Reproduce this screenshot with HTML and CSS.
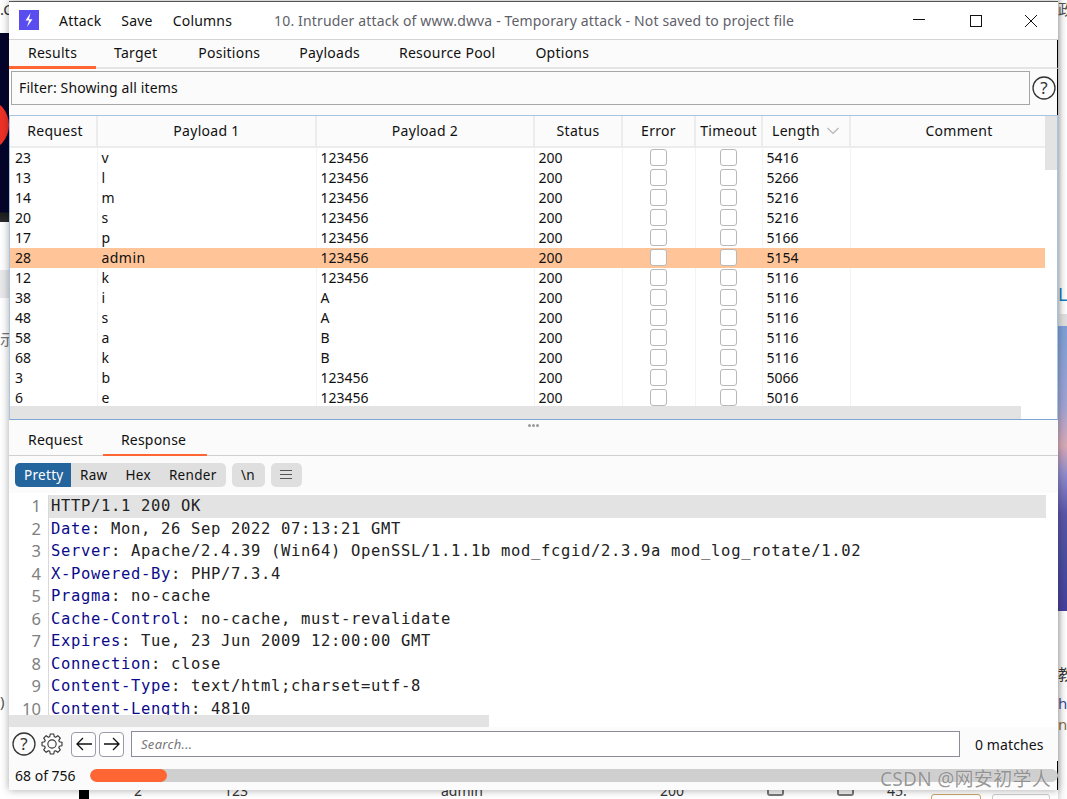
FILE: index.html
```html
<!DOCTYPE html>
<html lang="en">
<head>
<meta charset="utf-8">
<title>Intruder attack</title>
<link rel="stylesheet" href="styles.css">
</head>
<body>
<div class="backdrop">
  <div class="bg-left-image"><div class="bg-red"></div></div>
  <div class="bg-left-band"></div>
  <span class="bg-frag bg-f1">.C</span>
  <span class="bg-frag bg-f2">示</span>
  <span class="bg-frag bg-f3">)</span>
  <div class="bg-right-shade"></div>
  <div class="bg-right-band"></div>
  <div class="bg-right-image"></div>
  <span class="bg-frag bg-f4">政</span>
  <span class="bg-frag bg-f5">L:</span>
  <span class="bg-frag bg-f6">教</span>
  <span class="bg-frag bg-f7">hp</span>
  <span class="bg-frag bg-f8">n'</span>
  <div class="bg-row">
    <span class="bg-block"></span>
    <span class="bg-cell c1">2</span>
    <span class="bg-cell c2">123</span>
    <span class="bg-cell c3">admin</span>
    <span class="bg-cell c4">200</span>
    <span class="bg-check k1"></span>
    <span class="bg-check k2"></span>
    <span class="bg-cell c5">45:</span>
    <span class="bg-btn b1"></span>
    <span class="bg-btn b2"></span>
  </div>
</div>

<div class="window">
  <header class="titlebar">
    <svg class="logo" viewBox="0 0 20 20" width="20" height="20"><rect width="20" height="20" fill="#5a4df0"/><path d="M11.500 3 6.500 10.500h3.600L8 17l5.500-7.800H10z" fill="#fff"/></svg>
    <nav class="menu"><span>Attack</span><span>Save</span><span>Columns</span></nav>
    <div class="wintitle">10. Intruder attack of www.dwva - Temporary attack - Not saved to project file</div>
    <div class="winbtns">
      <svg width="14" height="14" viewBox="0 0 14 14"><path d="M1 5.500h12" stroke="#111" stroke-width="1"/></svg>
      <svg width="14" height="14" viewBox="0 0 14 14"><rect x="1.500" y="1.500" width="11" height="11" fill="none" stroke="#111"/></svg>
      <svg width="14" height="14" viewBox="0 0 14 14"><path d="M1 1l12 12M13 1 1 13" stroke="#111" fill="none"/></svg>
    </div>
  </header>

  <div class="tabs">
    <span class="tab active">Results</span>
    <span class="tab t-target">Target</span>
    <span class="tab t-pos">Positions</span>
    <span class="tab t-pay">Payloads</span>
    <span class="tab t-res">Resource Pool</span>
    <span class="tab t-opt">Options</span>
  </div>

  <div class="filter-row">
    <div class="filter">Filter: Showing all items</div>
    <svg class="help" width="24" height="24" viewBox="0 0 24 24"><circle cx="12" cy="12" r="11" fill="none" stroke="#333" stroke-width="1.300"/><text x="12" y="18" text-anchor="middle" class="help-q">?</text></svg>
  </div>

  <section class="results">
    <div class="results-body">
      <table class="grid">
        <colgroup>
          <col class="w-req"><col class="w-p1"><col class="w-p2"><col class="w-st"><col class="w-err"><col class="w-to"><col class="w-len"><col>
        </colgroup>
        <thead>
          <tr><th>Request</th><th>Payload 1</th><th>Payload 2</th><th>Status</th><th>Error</th><th>Timeout</th><th>Length <svg class="sort" width="14" height="8" viewBox="0 0 14 8"><path d="M1.500 1 7 6.500 12.500 1" fill="none" stroke="#b5b5b5" stroke-width="1.200"/></svg></th><th>Comment</th></tr>
        </thead>
        <tbody>
          <tr><td>23</td><td class="pl">v</td><td>123456</td><td>200</td><td class="cb"><i></i></td><td class="cb"><i></i></td><td>5416</td><td></td></tr>
          <tr><td>13</td><td class="pl">l</td><td>123456</td><td>200</td><td class="cb"><i></i></td><td class="cb"><i></i></td><td>5266</td><td></td></tr>
          <tr><td>14</td><td class="pl">m</td><td>123456</td><td>200</td><td class="cb"><i></i></td><td class="cb"><i></i></td><td>5216</td><td></td></tr>
          <tr><td>20</td><td class="pl">s</td><td>123456</td><td>200</td><td class="cb"><i></i></td><td class="cb"><i></i></td><td>5216</td><td></td></tr>
          <tr><td>17</td><td class="pl">p</td><td>123456</td><td>200</td><td class="cb"><i></i></td><td class="cb"><i></i></td><td>5166</td><td></td></tr>
          <tr class="sel"><td>28</td><td class="pl">admin</td><td>123456</td><td>200</td><td class="cb"><i></i></td><td class="cb"><i></i></td><td>5154</td><td></td></tr>
          <tr><td>12</td><td class="pl">k</td><td>123456</td><td>200</td><td class="cb"><i></i></td><td class="cb"><i></i></td><td>5116</td><td></td></tr>
          <tr><td>38</td><td class="pl">i</td><td>A</td><td>200</td><td class="cb"><i></i></td><td class="cb"><i></i></td><td>5116</td><td></td></tr>
          <tr><td>48</td><td class="pl">s</td><td>A</td><td>200</td><td class="cb"><i></i></td><td class="cb"><i></i></td><td>5116</td><td></td></tr>
          <tr><td>58</td><td class="pl">a</td><td>B</td><td>200</td><td class="cb"><i></i></td><td class="cb"><i></i></td><td>5116</td><td></td></tr>
          <tr><td>68</td><td class="pl">k</td><td>B</td><td>200</td><td class="cb"><i></i></td><td class="cb"><i></i></td><td>5116</td><td></td></tr>
          <tr><td>3</td><td class="pl">b</td><td>123456</td><td>200</td><td class="cb"><i></i></td><td class="cb"><i></i></td><td>5066</td><td></td></tr>
          <tr><td>6</td><td class="pl">e</td><td>123456</td><td>200</td><td class="cb"><i></i></td><td class="cb"><i></i></td><td>5016</td><td></td></tr>
        </tbody>
      </table>
      <div class="vscroll"><div class="vthumb"></div></div>
    </div>
    <div class="hscroll"><div class="hthumb"></div></div>
  </section>

  <div class="splitter"><b></b><b></b><b></b></div>

  <div class="subtabs">
    <span class="subtab">Request</span>
    <span class="subtab active">Response</span>
  </div>

  <div class="viewbar">
    <div class="seg"><span class="on">Pretty</span><span>Raw</span><span>Hex</span><span>Render</span></div>
    <span class="pill">\n</span>
    <span class="pill burger"><svg width="14" height="11" viewBox="0 0 14 11"><path d="M1 1.500h12M1 5.500h12M1 9.500h12" stroke="#555" stroke-width="1"/></svg></span>
  </div>

  <div class="code">
    <div class="gutter"><span>1</span><span>2</span><span>3</span><span>4</span><span>5</span><span>6</span><span>7</span><span>8</span><span>9</span><span>10</span></div>
    <div class="lines">
      <div class="line first">HTTP/1.1 200 OK</div>
      <div class="line"><em>Date</em>: Mon, 26 Sep 2022 07:13:21 GMT</div>
      <div class="line"><em>Server</em>: Apache/2.4.39 (Win64) OpenSSL/1.1.1b mod_fcgid/2.3.9a mod_log_rotate/1.02</div>
      <div class="line"><em>X-Powered-By</em>: PHP/7.3.4</div>
      <div class="line"><em>Pragma</em>: no-cache</div>
      <div class="line"><em>Cache-Control</em>: no-cache, must-revalidate</div>
      <div class="line"><em>Expires</em>: Tue, 23 Jun 2009 12:00:00 GMT</div>
      <div class="line"><em>Connection</em>: close</div>
      <div class="line"><em>Content-Type</em>: text/html;charset=utf-8</div>
      <div class="line"><em>Content-Length</em>: 4810</div>
    </div>
  </div>
  <div class="codescroll"><div class="codethumb"></div></div>

  <div class="searchbar">
    <svg class="s-help" width="24" height="24" viewBox="0 0 24 24"><circle cx="12" cy="12" r="11" fill="none" stroke="#333" stroke-width="1.300"/><text x="12" y="18" text-anchor="middle" class="help-q">?</text></svg>
    <svg class="s-gear" width="24" height="24" viewBox="0 0 26 26"><g fill="none" stroke="#333" stroke-width="1.200" stroke-linejoin="round"><circle cx="13" cy="13" r="4.500"/><polygon points="10.57,5.06 11.09,2.17 14.91,2.17 15.43,5.06 16.90,5.67 19.31,3.99 22.01,6.69 20.33,9.10 20.94,10.57 23.83,11.09 23.83,14.91 20.94,15.43 20.33,16.90 22.01,19.31 19.31,22.01 16.90,20.33 15.43,20.94 14.91,23.83 11.09,23.83 10.57,20.94 9.10,20.33 6.69,22.01 3.99,19.31 5.67,16.90 5.06,15.43 2.17,14.91 2.17,11.09 5.06,10.57 5.67,9.10 3.99,6.69 6.69,3.99 9.10,5.67"/></g></svg>
    <span class="arrow"><svg width="18" height="14" viewBox="0 0 18 14"><path d="M17 7H2M8 1 2 7l6 6" fill="none" stroke="#111" stroke-width="1.300"/></svg></span>
    <span class="arrow next"><svg width="18" height="14" viewBox="0 0 18 14"><path d="M1 7h15M10 1l6 6-6 6" fill="none" stroke="#111" stroke-width="1.300"/></svg></span>
    <div class="search">Search...</div>
    <span class="matches">0 matches</span>
  </div>

  <div class="statusbar">
    <span class="count">68 of 756</span>
    <div class="progress"><div class="progress-fill"></div></div>
  </div>
</div>

<div class="watermark">CSDN @网安初学人</div>
</body>
</html>
```
FILE: styles.css
```css
* { box-sizing: border-box; }
html, body { margin: 0; height: 799px; overflow: hidden; }
body {
  position: relative;
  background: #fff;
  font-family: "Noto Sans", "Noto Sans CJK SC", sans-serif;
  font-size: 14px;
  color: #111;
  padding: 1px 0 0 9px;
}

/* page lying behind the window */
.backdrop { position: absolute; inset: 0; overflow: hidden; background: #fff; }
.bg-left-image { position: absolute; left: 0; top: 33px; width: 9px; height: 189px; background: linear-gradient(180deg, #05052b 0, #05052b 179px, #1d1d1d 180px, #2c2c2c 100%); overflow: hidden; }
.bg-red { position: absolute; left: -36px; top: 67px; width: 45px; height: 50px; border-radius: 50%; background: #ee3127; }
.bg-left-band { position: absolute; left: 0; top: 270px; width: 9px; height: 28px; background: #e9e9ec; }
.bg-right-shade { position: absolute; left: 1058px; top: 0; width: 9px; height: 799px; background: linear-gradient(90deg, #dcdcdc 0, #f6f6f6 4px, #fff 100%); }
.bg-right-band { position: absolute; left: 1058px; top: 314px; width: 9px; height: 12px; background: #dedede; }
.bg-right-image { position: absolute; left: 1058px; top: 326px; width: 9px; height: 285px; background: linear-gradient(180deg, #7d9fd6 0%, #9fa3d2 28%, #d7a9b5 42%, #8f8bcc 52%, #5b55a8 66%, #4c4f9f 80%, #46409a 100%); }
.bg-frag { position: absolute; font-size: 15px; line-height: 18px; color: #333; }
.bg-f1 { left: 0; top: 0; }
.bg-f2 { left: 0; top: 330px; color: #777; }
.bg-f3 { left: 0; top: 692px; color: #555; }
.bg-f4 { left: 1058px; top: 0; color: #555; }
.bg-f5 { left: 1058px; top: 284px; font-size: 18px; line-height: 20px; color: #1279b8; }
.bg-f6 { left: 1058px; top: 665px; }
.bg-f7 { left: 1058px; top: 694px; color: #3f4a90; }
.bg-f8 { left: 1058px; top: 715px; color: #8a6a3a; }
.bg-row { position: absolute; left: 0; top: 786px; width: 1067px; height: 13px; }
.bg-block { position: absolute; left: 79px; top: 4px; width: 10px; height: 9px; background: #000; }
.bg-cell { position: absolute; top: -4px; font-size: 14px; line-height: 18px; color: #333; }
.c1 { left: 134px; } .c2 { left: 224px; } .c3 { left: 441px; } .c4 { left: 660px; } .c5 { left: 887px; }
.bg-check { position: absolute; top: 0; width: 17px; height: 10px; border: 2px solid #777; border-top: 0; border-radius: 0 0 3px 3px; background: #eee; }
.k1 { left: 767px; } .k2 { left: 837px; }
.bg-btn { position: absolute; top: 8px; height: 8px; border: 1px solid #c9a469; border-radius: 3px 3px 0 0; }
.b1 { left: 931px; width: 50px; } .b2 { left: 992px; width: 58px; border-color: #ccc; }

/* window */
.window {
  position: relative;
  width: 1049px;
  height: 789px;
  background: #fbfbfb;
  border-top: 1px solid #555;
  box-shadow: 0 0 8px rgba(0,0,0,.35);
}
.titlebar { display: flex; align-items: center; height: 38px; padding-left: 10px; background: #fff; border-bottom: 1px solid #d4d4d4; }
.logo { flex: none; margin-top: -1px; }
.menu { display: flex; gap: 20px; margin-left: 20px; letter-spacing: .2px; }
.wintitle { margin-left: 42px; color: #5f5f6a; letter-spacing: .15px; white-space: nowrap; }
.winbtns { display: flex; gap: 41px; margin-left: auto; padding-right: 20px; }
.winbtns svg:first-child { margin-right: 2px; }

.tabs { display: flex; height: 29px; line-height: 25px; border-bottom: 2px solid #e4e4e4; border-right: 1px solid #000; letter-spacing: .25px; }
.tab { display: block; }
.tab.active { width: 87px; padding-left: 19px; height: 29px; border-bottom: 3px solid #ff6633; }
.t-target { margin-left: 18px; }
.t-pos { margin-left: 41px; }
.t-pay { margin-left: 39px; }
.t-res { margin-left: 39px; }
.t-opt { margin-left: 40px; }

.filter-row { display: flex; align-items: flex-start; gap: 2px; height: 46px; padding: 2px 1px 0 2px; border-right: 1px solid #000; }
.filter { flex: none; width: 1019px; height: 34px; line-height: 32px; padding-left: 7px; border: 1px solid #a6a6a6; letter-spacing: .12px; }
.help { flex: none; margin-top: 5px; }
.help-q { font: 400 17px "Noto Sans", sans-serif; fill: #333; }

.results { height: 305px; background: #fff; border: 1px solid #a8c4e4; border-bottom: 1px solid #7da7d9; display: flex; flex-direction: column; }
.results-body { display: flex; height: 291px; overflow: hidden; }
.grid { flex: none; width: 1035px; table-layout: fixed; border-collapse: collapse; }
.w-req { width: 87px; } .w-p1 { width: 219px; } .w-p2 { width: 218px; } .w-st { width: 88px; } .w-err { width: 73px; } .w-to { width: 67px; } .w-len { width: 88px; }
.grid th { height: 31px; padding: 0 0 2px; font-weight: 400; letter-spacing: .3px; background: #fbfbfb; border-right: 2px solid #ececec; border-bottom: 2px solid #ececec; white-space: nowrap; }
.grid th:first-child { padding-left: 4px; }
.grid th:last-child { border-right: 0; padding-left: 22px; }
.sort { margin-left: 2px; vertical-align: 1px; }
.grid td { height: 20px; padding: 0 0 0 4px; border-right: 1px solid #f3f3f3; line-height: 18px; overflow: hidden; }
.grid td:first-child { padding-left: 5px; }
.grid td:last-child { border-right: 0; }
.grid td.pl { letter-spacing: .45px; }
.grid td.cb { padding: 0; text-align: center; }
.cb i { display: block; width: 17px; height: 17px; margin: 1px auto 2px; border: 1.500px solid #b8b8b8; border-radius: 3px; background: #fff; }
.sel td { background: #ffc497; border-right-color: #ffc497; }
.vscroll { flex: 1; background: #fff; }
.vthumb { height: 54px; width: 12px; background: #e3e3e3; }
.hscroll { height: 13px; background: #fff; }
.hthumb { width: 1011px; height: 13px; background: #e3e3e3; }

.splitter { display: flex; justify-content: center; align-items: center; gap: 1px; height: 10px; }
.splitter b { width: 3px; height: 3px; border-radius: 50%; background: #9a9a9a; }

.subtabs { display: flex; height: 26px; line-height: 20px; border-bottom: 1px solid #d0d0d0; letter-spacing: .2px; }
.subtab { padding-left: 19px; }
.subtab.active { width: 104px; height: 26px; margin-left: 20px; padding: 0 0 0 18px; border-bottom: 2px solid #ff6633; }

.viewbar { display: flex; align-items: center; gap: 6px; height: 37px; padding-left: 6px; font-size: 13.500px; letter-spacing: .3px; }
.seg { display: flex; height: 24px; line-height: 24px; border-radius: 5px; background: #dfdfdf; overflow: hidden; }
.seg span { padding: 0 9px; }
.seg .on { width: 56px; padding: 0 9px; background: #25659e; color: #fff; }
.pill { display: block; width: 33px; height: 24px; line-height: 24px; text-align: center; border-radius: 5px; background: #dfdfdf; }
.burger { display: flex; align-items: center; justify-content: center; width: 31px; }

.code { display: flex; height: 222px; padding-top: 2px; overflow: hidden; background: #fff; font-family: "DejaVu Sans Mono", "Liberation Mono", monospace; font-size: 15.500px; letter-spacing: .67px; }
.gutter { flex: none; width: 40px; border-right: 1px solid #d9d9d9; text-align: right; padding-right: 7px; font-family: "Noto Sans", sans-serif; font-size: 16.500px; letter-spacing: 0; color: #808080; }
.gutter span { display: block; height: 22.500px; line-height: 22.500px; }
.lines { flex: 1; padding-right: 12px; }
.line { height: 22.500px; line-height: 22.500px; padding-left: 2px; white-space: pre; color: #222; }
.line.first { background: #e3e3e3; }
.line em { font-style: normal; color: #0b0b8a; }

.codescroll { height: 12px; background: #fff; }
.codethumb { width: 480px; height: 12px; background: #e3e3e3; }

.searchbar { display: flex; align-items: center; height: 34px; padding-left: 3px; }
.s-help { flex: none; }
.s-gear { flex: none; margin-left: 4px; }
.arrow { display: flex; align-items: center; justify-content: center; width: 25px; height: 25px; margin-left: 7px; border: 1px solid #9a9aa8; border-radius: 4px; background: #fff; }
.arrow.next { margin-left: 3px; }
.search { flex: none; width: 829px; height: 26px; margin-left: 7px; line-height: 24px; padding-left: 9px; border: 1px solid #8b8b9a; background: #fff; font-style: italic; font-size: 13px; color: #777; letter-spacing: .3px; }
.matches { margin-left: 15px; letter-spacing: .1px; }

.statusbar { display: flex; align-items: center; height: 29px; padding-left: 6px; border-right: 1px solid #000; }
.count { flex: none; width: 75px; }
.progress { flex: 1; height: 13px; margin-right: -1px; position: relative; background: #cfcfcf; border-radius: 7px; overflow: hidden; }
.progress-fill { width: 77px; height: 13px; background: #ff6633; border-radius: 7px; }

.watermark { position: absolute; left: 880px; top: 768px; font-size: 19px; line-height: 22px; color: rgba(110,110,110,.72); text-shadow: 0 0 1px rgba(255,255,255,.8); letter-spacing: .3px; white-space: nowrap; }
```
